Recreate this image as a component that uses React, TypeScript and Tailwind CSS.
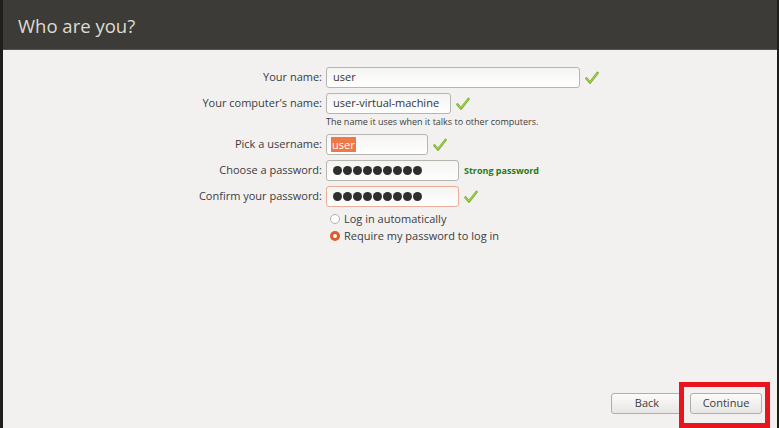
import React from 'react';

const Check = () => (
  <svg width="14" height="14" viewBox="0 0 14 14" className="shrink-0">
    <path d="M1.5 7.5 L5 11.5 L12.5 2" fill="none" stroke="#7fb42f" strokeWidth="2.6" strokeLinecap="round" strokeLinejoin="round" />
    <path d="M1.8 7.6 L5 11 L12.2 2.3" fill="none" stroke="#a6d957" strokeWidth="1" strokeLinecap="round" strokeLinejoin="round" />
  </svg>
);

const Dots = () => (
  <div className="flex items-center gap-[1px]">
    {Array.from({ length: 9 }).map((_, i) => (
      <span key={i} className="w-[9px] h-[9px] rounded-full bg-[#2e2e2e]" />
    ))}
  </div>
);

const Field = ({ w, border = 'border-[#b7b5af]', children }: { w: string; border?: string; children: React.ReactNode }) => (
  <div className={`${w} h-[21px] rounded-[3px] border ${border} bg-gradient-to-b from-[#f4f4f3] to-[#ffffff] flex items-center pl-[6px] text-[11px] text-[#333]`}>
    {children}
  </div>
);

const Label = ({ children }: { children: React.ReactNode }) => (
  <div className="w-[323px] pr-[4px] text-right text-[11px] text-[#3c3c3c]">{children}</div>
);

export default function App() {
  return (
    <div
      className="w-[779px] h-[428px] bg-[#1f1e1c] pl-[3px] pr-[2px] flex flex-col overflow-hidden"
      style={{ fontFamily: '"Open Sans", "DejaVu Sans", sans-serif' }}
    >
      <div className="h-[50px] bg-[#3c3b37] border-b border-[#55534e] flex items-center pl-[15px] pt-[3px] shrink-0">
        <span className="text-[18.5px] text-[#dfdbd2] leading-none">Who are you?</span>
      </div>
      <div className="relative flex-1 bg-[#f2f1f0] flex flex-col pt-[17px]">
        <div className="flex items-center h-[21px]">
          <Label>Your name:</Label>
          <Field w="w-[254px]">user</Field>
          <span className="ml-[5px]"><Check /></span>
        </div>
        <div className="flex items-center h-[21px] mt-[5px]">
          <Label>Your computer's name:</Label>
          <Field w="w-[125px]">user-virtual-machine</Field>
          <span className="ml-[5px]"><Check /></span>
        </div>
        <div className="flex h-[15px] items-center">
          <div className="w-[323px]" />
          <span className="text-[9px] text-[#3c3c3c]">The name it uses when it talks to other computers.</span>
        </div>
        <div className="flex items-center h-[21px] mt-[5px]">
          <Label>Pick a username:</Label>
          <Field w="w-[102px]">
            <span className="bg-[#f07746] text-white px-[1px] leading-[15px] -ml-[2px]">user</span>
          </Field>
          <span className="ml-[5px]"><Check /></span>
        </div>
        <div className="flex items-center h-[21px] mt-[5px]">
          <Label>Choose a password:</Label>
          <Field w="w-[133px]"><Dots /></Field>
          <span className="ml-[5px] text-[9px] font-bold text-[#1e7d12]">Strong password</span>
        </div>
        <div className="flex items-center h-[21px] mt-[5px]">
          <Label>Confirm your password:</Label>
          <Field w="w-[133px]" border="border-[#e9ad98]"><Dots /></Field>
          <span className="ml-[5px]"><Check /></span>
        </div>
        <div className="flex flex-col pl-[323px] mt-[4px] text-[11px] text-[#3c3c3c] gap-[1px]">
          <div className="flex items-center h-[16px]">
            <span className="w-[10px] h-[10px] rounded-full border border-[#b3b1ab] bg-white ml-[4px] mr-[4px]" />
            Log in automatically
          </div>
          <div className="flex items-center h-[16px]">
            <span className="w-[10px] h-[10px] rounded-full bg-[#e05a2b] flex items-center justify-center ml-[4px] mr-[4px]">
              <span className="w-[4px] h-[4px] rounded-full bg-white" />
            </span>
            Require my password to log in
          </div>
        </div>
        <div className="flex-1" />
        <div className="flex justify-end gap-[7px] pr-[15px] pb-[14px] text-[11px] text-[#3c3c3c]">
          <button className="w-[72px] h-[21px] rounded-[3px] border border-[#b0aea9] bg-gradient-to-b from-[#fbfbfa] to-[#e7e6e4]">Back</button>
          <button className="w-[72px] h-[21px] rounded-[3px] border border-[#b0aea9] bg-gradient-to-b from-[#fbfbfa] to-[#e7e6e4]">Continue</button>
        </div>
        <div className="absolute left-[676px] top-[332px] w-[91px] h-[46px] border-[5px] border-[#e8141e]" />
      </div>
    </div>
  );
}
